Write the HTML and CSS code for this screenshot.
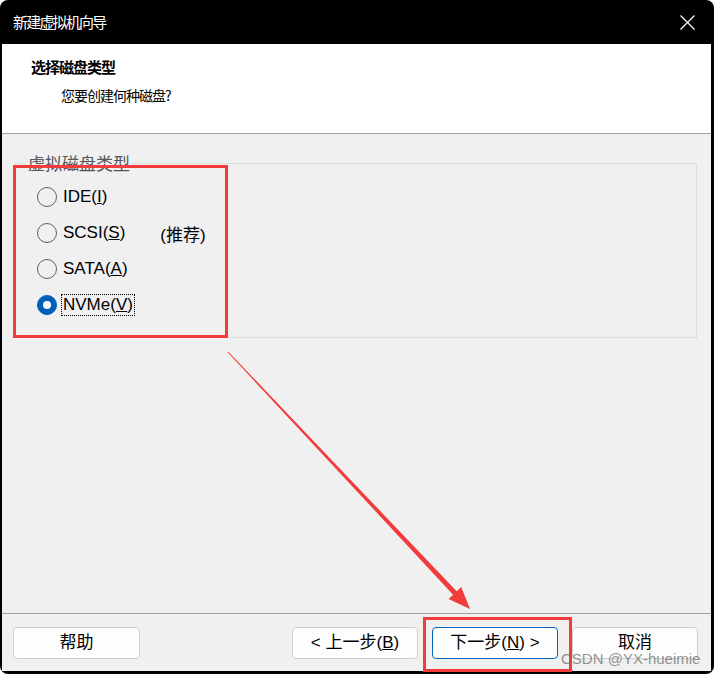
FILE: index.html
```html
<!DOCTYPE html>
<html lang="zh-CN">
<head>
<meta charset="utf-8">
<title>新建虚拟机向导</title>
<link rel="stylesheet" href="styles.css">
</head>
<body>
<div class="window">
  <div class="titlebar">
    <span class="title">新建虚拟机向导</span>
    <svg class="close" width="15" height="15" viewBox="0 0 15 15"><path d="M0.5 0.5 L14.5 14.5 M14.5 0.5 L0.5 14.5" stroke="#fff" stroke-width="1.2" fill="none"/></svg>
  </div>
  <div class="content">
    <div class="header">
      <div class="h-title">选择磁盘类型</div>
      <div class="h-sub">您要创建何种磁盘?</div>
    </div>
    <div class="body">
      <fieldset class="group">
        <legend class="legend">虚拟磁盘类型</legend>
        <div class="options">
          <div class="opt"><span class="radio"></span><span class="lbl">IDE(<u>I</u>)</span></div>
          <div class="opt"><span class="radio"></span><span class="lbl">SCSI(<u>S</u>)</span><span class="rec">(推荐)</span></div>
          <div class="opt"><span class="radio"></span><span class="lbl">SATA(<u>A</u>)</span></div>
          <div class="opt"><span class="radio checked"></span><span class="lbl focus">NVMe(<u>V</u>)</span></div>
        </div>
      </fieldset>
    </div>
    <div class="footer">
      <button class="btn">帮助</button>
      <div class="btn-group">
        <button class="btn">&lt; 上一步(<u>B</u>)</button>
        <button class="btn primary">下一步(<u>N</u>) &gt;</button>
        <button class="btn">取消</button>
      </div>
    </div>
  </div>
  <div class="redbox box1"></div>
  <div class="redbox box2"></div>
  <svg class="arrow" width="714" height="674" viewBox="0 0 714 674">
    <polygon points="227.6,352.3 453.1,594.7 448.6,599 470,609 461.2,587 456.7,591.3 228.4,351.7" fill="#f23b3b"/>
  </svg>
  <div class="watermark">CSDN @YX-hueimie</div>
</div>
</body>
</html>
```
FILE: styles.css
```css
* { box-sizing: border-box; }
html, body { margin: 0; padding: 0; background: #ffffff; }
body { font-family: "Liberation Sans", "Noto Sans CJK SC", sans-serif; }

.window {
  position: relative;
  width: 714px;
  height: 674px;
  background: #000;
  border-radius: 8px;
  padding: 0 3px 3px 2px;
  display: flex;
  flex-direction: column;
  overflow: hidden;
}

.titlebar {
  height: 44px;
  flex: none;
  display: flex;
  align-items: center;
  justify-content: space-between;
  padding: 0 16px 0 11px;
}
.title {
  color: #fff;
  font-family: "Noto Sans CJK SC", sans-serif;
  font-size: 15px;
  letter-spacing: -1.8px;
  line-height: 44px;
}
.close { display: block; }

.content {
  flex: 1;
  background: #f0f0f0;
  display: flex;
  flex-direction: column;
}

.header {
  height: 90px;
  flex: none;
  background: #fff;
  border-bottom: 1px solid #a0a0a0;
  padding: 13px 0 0 29px;
  font-family: "Noto Sans CJK SC", sans-serif;
  color: #000;
}
.h-title {
  font-size: 15px;
  font-weight: bold;
  letter-spacing: -1px;
  line-height: 20px;
}
.h-sub {
  font-size: 14px;
  letter-spacing: -1px;
  line-height: 20px;
  margin: 8px 0 0 30px;
}

.body { flex: 1; }

.group {
  margin: 19px 14px 0 13px;
  padding: 0 0 14px 0;
  border: 1px solid #dcdcdc;
  min-width: 0;
}
.legend {
  margin-left: 10px;
  padding: 0 2px;
  font-family: "Noto Sans CJK SC", sans-serif;
  font-size: 17px;
  line-height: 20px;
  color: #555;
}
.options { padding-top: 6px; }
.opt {
  height: 36px;
  display: flex;
  align-items: center;
  padding-left: 21px;
  font-size: 17px;
  color: #000;
}
.radio {
  width: 20px;
  height: 20px;
  border: 1px solid #5e5e5e;
  border-radius: 50%;
  flex: none;
  display: flex;
  align-items: center;
  justify-content: center;
}
.radio.checked {
  background: #005fb8;
  border-color: #005fb8;
}
.radio.checked::after {
  content: "";
  width: 8px;
  height: 8px;
  border-radius: 50%;
  background: #fff;
}
.lbl {
  margin-left: 4px;
  line-height: 20px;
  padding: 0 1px;
  border: 1px solid transparent;
}
.lbl.focus { border: 1px dotted #000; }
.rec {
  margin-left: 33px;
  font-family: "Liberation Sans", "Noto Sans CJK SC", sans-serif;
}

.footer {
  height: 58px;
  flex: none;
  border-top: 1px solid #a0a0a0;
  display: flex;
  align-items: flex-start;
  padding: 13px 13px 0 11px;
}
.btn-group {
  margin-left: auto;
  display: flex;
  gap: 14px;
}
.btn {
  width: 127px;
  height: 32px;
  background: #fdfdfd;
  border: 1px solid #d0d0d0;
  border-radius: 4px;
  font-family: "Liberation Sans", "Noto Sans CJK SC", sans-serif;
  font-size: 17px;
  line-height: 20px;
  color: #000;
  padding: 0;
}
.btn-group .btn { width: 126px; }
.btn.primary { border-color: #0067c0; }

.redbox {
  position: absolute;
  border: 3px solid #f23b3b;
}
.box1 { left: 13px; top: 165px; width: 215px; height: 173px; }
.box2 { left: 423px; top: 617px; width: 149px; height: 55px; }

.arrow { position: absolute; left: 0; top: 0; pointer-events: none; }

.watermark {
  position: absolute;
  left: 561px;
  top: 650px;
  font-family: "Liberation Sans", sans-serif;
  font-size: 15px;
  line-height: 17px;
  color: rgba(110, 110, 110, 0.75);
  white-space: nowrap;
}
```
